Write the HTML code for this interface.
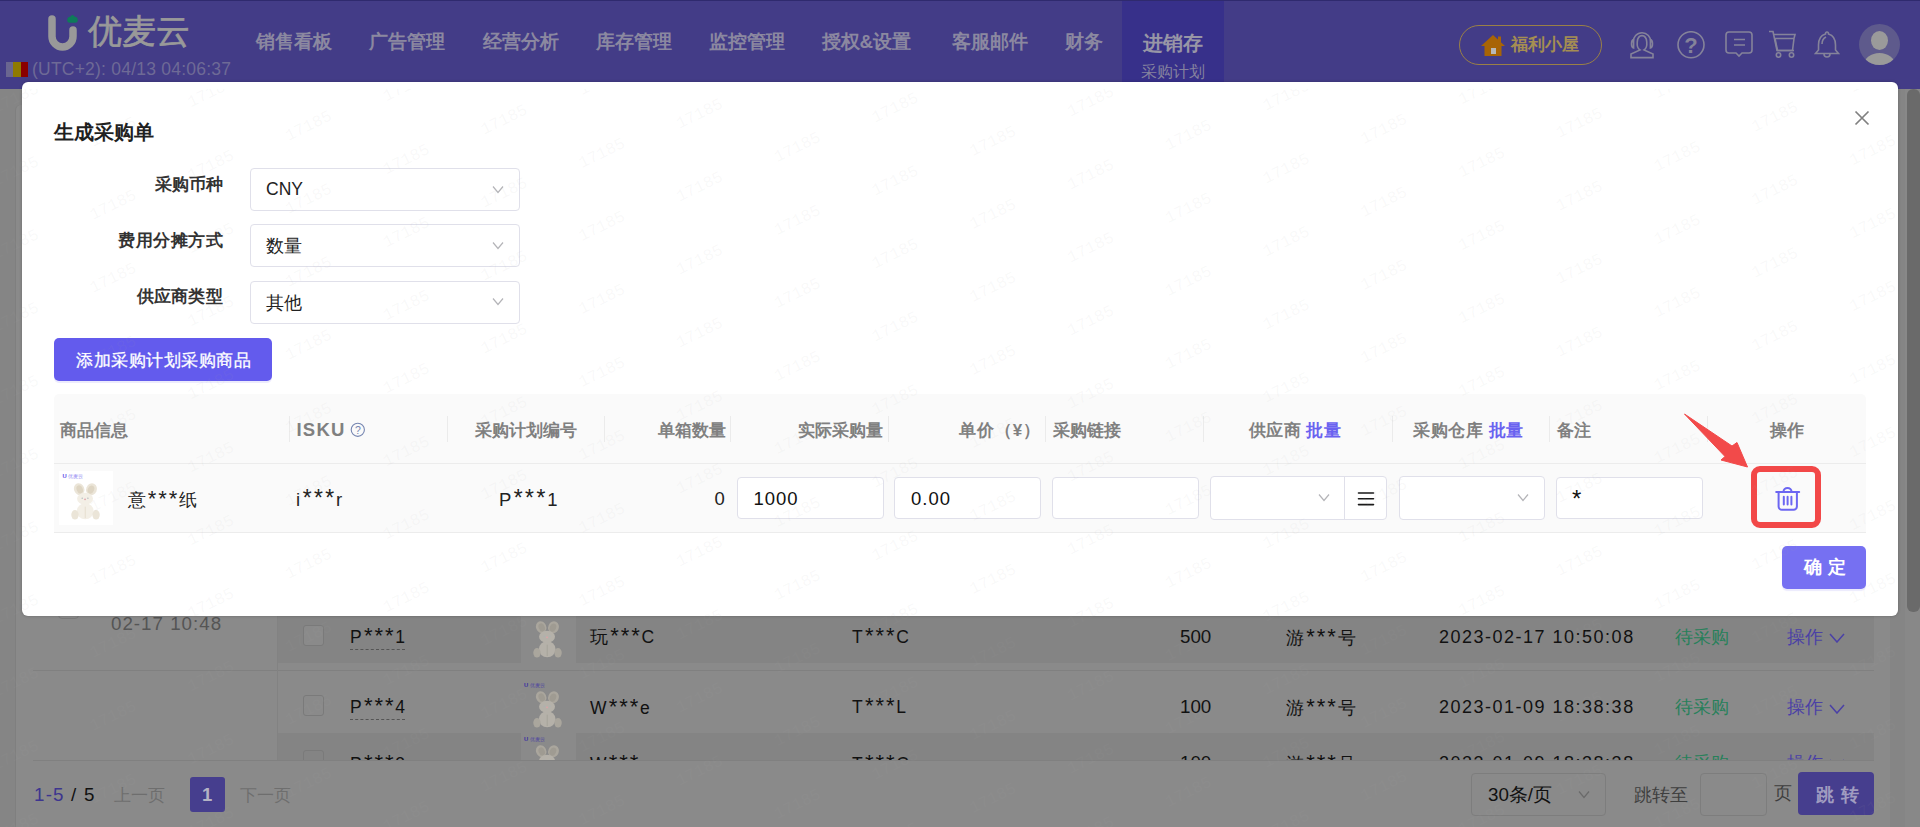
<!DOCTYPE html>
<html><head><meta charset="utf-8">
<style>
html,body{margin:0;padding:0;width:1920px;height:827px;overflow:hidden;background:#858585;font-family:"Liberation Sans",sans-serif;}
.a{position:absolute;}
.t{position:absolute;white-space:nowrap;line-height:1;}
.b{font-weight:bold;}
.mono{font-family:"Liberation Mono",monospace;}
.ast{font-family:"Liberation Mono",monospace;font-size:1.25em;letter-spacing:-2.6px;vertical-align:-0.05em;margin-right:2px}
</style></head><body>
<svg width="0" height="0" style="position:absolute"><defs>
<symbol id="rab" viewBox="0 0 40 46">
  <ellipse cx="12.8" cy="10.5" rx="5.4" ry="6.4" transform="rotate(-22 12.8 10.5)" fill="var(--c2)"/>
  <ellipse cx="25.8" cy="10.7" rx="5.6" ry="6.4" transform="rotate(24 25.8 10.7)" fill="var(--c2)"/>
  <ellipse cx="13.2" cy="11" rx="3.2" ry="4.4" transform="rotate(-22 12.8 10.5)" fill="var(--c3)"/>
  <ellipse cx="25.4" cy="11.2" rx="3.3" ry="4.4" transform="rotate(24 25.8 10.7)" fill="var(--c3)"/>
  <ellipse cx="19.2" cy="33.8" rx="8.8" ry="8.4" fill="var(--c1)"/>
  <ellipse cx="19" cy="20.6" rx="8.4" ry="6.4" fill="var(--c1)"/>
  <ellipse cx="8.4" cy="37.6" rx="3.9" ry="5" fill="var(--c2)"/>
  <ellipse cx="30.6" cy="37.6" rx="3.9" ry="5" fill="var(--c2)"/>
  <path d="M19.2 29 V41" stroke="var(--c3)" stroke-width="0.7"/>
  <circle cx="16" cy="20" r="0.7" fill="#a8b0b8"/><circle cx="22" cy="20" r="0.7" fill="#a8b0b8"/>
  <circle cx="19" cy="21.2" r="0.9" fill="#e0a0a8"/>
</symbol></defs></svg>
<!-- ============ BACKGROUND (already masked colours) ============ -->
<div class="a" style="left:0;top:0;width:1920px;height:89px;background:#433c87;"></div>
<div class="a" style="left:0;top:0;width:1920px;height:1px;background:#2f2a6e;"></div>
<div class="a" style="left:1122px;top:1px;width:102px;height:88px;background:#37308a;"></div>
<!-- logo -->
<svg class="a" style="left:44px;top:12px" width="40" height="42" viewBox="0 0 40 42">
  <path d="M8 7 V24.5 A10.5 10.5 0 0 0 29 24.5 V18" fill="none" stroke="#999" stroke-width="7.5" stroke-linecap="round"/>
  <path d="M23.2 8 q0-3 3-3.3 q1-1.6 2.3-1.6 q1.3 0 2.3 1.6 q3 0.3 3 3.3 q0 2.8-2.6 2.8 h-5.4 q-2.6 0-2.6-2.8z" fill="#0e7a5a"/>
</svg>
<div class="t" style="left:88px;top:15px;font-size:33.75px;color:#999;-webkit-text-stroke:0.7px #999;">优麦云</div>
<div class="a" style="left:6px;top:62px;width:7px;height:15px;background:#6a6690;"></div>
<div class="a" style="left:13px;top:62px;width:8px;height:15px;background:#8f7a00;"></div>
<div class="a" style="left:21px;top:62px;width:7px;height:15px;background:#8a0000;"></div>
<div class="t" style="left:32px;top:60.5px;font-size:17.5px;color:#6e6a96;letter-spacing:0.22px">(UTC+2): 04/13 04:06:37</div>
<!-- nav -->
<div class="t b" style="left:256px;top:33px;font-size:18.75px;color:#8b88a0;">销售看板</div>
<div class="t b" style="left:369px;top:33px;font-size:18.75px;color:#8b88a0;">广告管理</div>
<div class="t b" style="left:482.5px;top:33px;font-size:18.75px;color:#8b88a0;">经营分析</div>
<div class="t b" style="left:596px;top:33px;font-size:18.75px;color:#8b88a0;">库存管理</div>
<div class="t b" style="left:709px;top:33px;font-size:18.75px;color:#8b88a0;">监控管理</div>
<div class="t b" style="left:821.5px;top:33px;font-size:18.75px;color:#8b88a0;">授权&amp;设置</div>
<div class="t b" style="left:951.5px;top:33px;font-size:18.75px;color:#8b88a0;">客服邮件</div>
<div class="t b" style="left:1065px;top:33px;font-size:18.75px;color:#8b88a0;">财务</div>
<div class="t b" style="left:1142.5px;top:32.5px;font-size:20px;color:#9896a6;">进销存</div>
<div class="t" style="left:1141px;top:63.5px;font-size:16px;color:#85829e;">采购计划</div>
<!-- right header -->
<div class="a" style="left:1459px;top:25px;width:141px;height:38px;border:1px solid #9a8046;border-radius:20px;"></div>
<svg class="a" style="left:1480px;top:34px" width="26" height="23" viewBox="0 0 26 23">
  <path d="M13 1 L25 12 h-3.5 V22 H4.5 V12 H1 Z" fill="#a86406"/>
  <rect x="18" y="2.5" width="3" height="6" fill="#a86406"/>
  <rect x="11" y="14" width="5" height="6" fill="#b8b8b8"/>
</svg>
<div class="t b" style="left:1511px;top:36px;font-size:17px;color:#a58e52;">福利小屋</div>
<svg class="a" style="left:1628px;top:30px" width="28" height="30" viewBox="0 0 28 30" fill="none" stroke="#85839a" stroke-width="1.6">
  <path d="M12 20 C7.8 17.5 8.2 5.6 14 5.6 C19.8 5.6 20.2 17.5 16 20 L25 24 V27.6 H3 V24 Z"/>
  <path d="M5 12.5 A9 9.8 0 0 1 23 12.5"/>
  <path d="M5.6 9.6 C2.8 10.2 2.8 17.4 5.6 18 Z"/>
  <path d="M22.4 9.6 C25.2 10.2 25.2 17.4 22.4 18 Z"/>
</svg>
<svg class="a" style="left:1676px;top:31px" width="30" height="30" viewBox="0 0 30 30">
  <circle cx="15" cy="13.75" r="13" fill="none" stroke="#85839a" stroke-width="1.6"/>
  <text x="15" y="22" text-anchor="middle" font-family="Liberation Sans" font-weight="bold" font-size="22" fill="#85839a">?</text>
</svg>
<svg class="a" style="left:1725px;top:31px" width="30" height="28" viewBox="0 0 30 28" fill="none" stroke="#85839a" stroke-width="1.6">
  <path d="M4 1 h20 a3 3 0 0 1 3 3 v15 a3 3 0 0 1 -3 3 h-7 l-3 3 l-3-3 h-7 a3 3 0 0 1 -3-3 v-15 a3 3 0 0 1 3-3z"/>
  <path d="M9 8.5 h11 M9 14 h11"/>
</svg>
<svg class="a" style="left:1768px;top:30px" width="30" height="29" viewBox="0 0 30 29" fill="none" stroke="#85839a" stroke-width="1.6">
  <path d="M1 1.5 h4 l4 19 h17"/><path d="M5.5 4.5 h21.5 l-1 4 h-20 M7 8.5 l2.5 12 h15 l1.5-12"/>
  <circle cx="10.5" cy="25" r="2.2"/><circle cx="23.5" cy="25" r="2.2"/>
</svg>
<svg class="a" style="left:1814px;top:30px" width="26" height="29" viewBox="0 0 26 29" fill="none" stroke="#85839a" stroke-width="1.6">
  <path d="M13 2 q1.5 0 1.5 2 q7 2 7 11 v5 l3 3.5 h-23 l3-3.5 v-5 q0-9 7-11 q0-2 1.5-2z"/>
  <path d="M10 24 a3 3 0 0 0 6 0"/><path d="M8 14 q0-5 4-7" />
</svg>
<div class="a" style="left:1859px;top:24px;width:41px;height:41px;border-radius:50%;background:#5e5a8c;overflow:hidden;">
  <div class="a" style="left:12px;top:7px;width:17px;height:19px;border-radius:50%;background:#9a9a9a;"></div>
  <div class="a" style="left:5px;top:28.5px;width:31px;height:24px;border-radius:50%;background:#9a9a9a;"></div>
</div>

<!-- page body -->
<div class="a" style="left:16px;top:105px;width:1874px;height:730px;background:#8a8a8a;border-radius:5px;box-shadow:-1px 0 0 rgba(0,0,0,0.04);"></div>
<!-- scrollbar -->
<div class="a" style="left:1905px;top:89px;width:15px;height:738px;background:#888;"></div>
<div class="a" style="left:1907px;top:89px;width:13px;height:523px;border-radius:6px;background:#6a6a6a;"></div>

<!-- background table rows -->
<div class="a" style="left:277px;top:616px;width:1597px;height:47px;background:#848484;"></div>
<div class="a" style="left:521px;top:616px;width:55px;height:47px;background:#8a8a8a;"></div>
<div class="a" style="left:33px;top:670px;width:1841px;height:1px;background:#808080;"></div>
<div class="a" style="left:277px;top:733px;width:1597px;height:27px;background:#848484;"></div>
<div class="a" style="left:521px;top:733px;width:55px;height:27px;background:#8a8a8a;"></div>
<div class="a" style="left:277px;top:616px;width:1px;height:144px;background:#828282;"></div>
<div class="a" style="left:33px;top:760px;width:1841px;height:1px;background:#808080;"></div>
<div class="a" style="left:58px;top:598px;width:19px;height:19px;border:1px solid #7a7a7a;border-radius:4px;"></div>
<div class="t" style="left:111px;top:615px;font-size:18.75px;color:#555;letter-spacing:1px">02-17 10:48</div>

<!-- row 1 -->
<div class="a" style="left:303px;top:625px;width:19px;height:19px;border:1px solid #7a7a7a;border-radius:3px;background:#8a8a8a;"></div>
<div class="t" style="left:350px;top:627.5px;font-size:17.5px;color:#111;">P<span class="ast">***</span>1</div>
<div class="a" style="left:350px;top:649px;width:55px;height:0;border-top:1px dashed #555;"></div>
<svg class="a" style="left:529px;top:617px;--c1:#b5b1a9;--c2:#aaa69d;--c3:#9f9b92" width="38" height="44"><use href="#rab"/></svg>
<div class="t" style="left:590px;top:627.5px;font-size:17.5px;color:#111;">玩<span class="ast">***</span>C</div>
<div class="t" style="left:852px;top:627.5px;font-size:17.5px;color:#111;">T<span class="ast">***</span>C</div>
<div class="t" style="left:1180px;top:627.5px;font-size:18.75px;color:#111;">500</div>
<div class="t" style="left:1286px;top:628.5px;font-size:17.5px;color:#111;">游<span class="ast">***</span>号</div>
<div class="t" style="left:1439px;top:628px;font-size:18px;color:#111;letter-spacing:1.5px">2023-02-17 10:50:08</div>
<div class="t" style="left:1675px;top:628.5px;font-size:17.5px;color:#27805a;">待采购</div>
<div class="t" style="left:1787px;top:628.5px;font-size:17.5px;color:#4a40a6;">操作</div><svg class="a" style="left:1829px;top:633px" width="16" height="10" viewBox="0 0 16 10"><path d="M1 1 L8 9 L15 1" fill="none" stroke="#4a40a6" stroke-width="1.5"/></svg>
<!-- row 2 -->
<div class="a" style="left:303px;top:695px;width:19px;height:19px;border:1px solid #7a7a7a;border-radius:3px;background:#8a8a8a;"></div>
<div class="t" style="left:350px;top:698px;font-size:17.5px;color:#111;">P<span class="ast">***</span>4</div>
<div class="a" style="left:350px;top:719px;width:55px;height:0;border-top:1px dashed #555;"></div>
<div class="t" style="left:524px;top:683px;font-size:5.2px;color:#4a42a0;"><b style="color:#3a30a0;font-size:5.8px">U</b> 优麦云</div><svg class="a" style="left:529px;top:687px;--c1:#b5b1a9;--c2:#aaa69d;--c3:#9f9b92" width="38" height="44"><use href="#rab"/></svg>
<div class="t" style="left:590px;top:699px;font-size:17.5px;color:#111;">W<span class="ast">***</span>e</div>
<div class="t" style="left:852px;top:698px;font-size:17.5px;color:#111;">T<span class="ast">***</span>L</div>
<div class="t" style="left:1180px;top:697.5px;font-size:18.75px;color:#111;">100</div>
<div class="t" style="left:1286px;top:699px;font-size:17.5px;color:#111;">游<span class="ast">***</span>号</div>
<div class="t" style="left:1439px;top:698px;font-size:18px;color:#111;letter-spacing:1.5px">2023-01-09 18:38:38</div>
<div class="t" style="left:1675px;top:699px;font-size:17.5px;color:#27805a;">待采购</div>
<div class="t" style="left:1787px;top:699px;font-size:17.5px;color:#4a40a6;">操作</div><svg class="a" style="left:1829px;top:704px" width="16" height="10" viewBox="0 0 16 10"><path d="M1 1 L8 9 L15 1" fill="none" stroke="#4a40a6" stroke-width="1.5"/></svg>
<!-- row 3 truncated -->
<div class="a" style="left:0;top:733px;width:1920px;height:27px;overflow:hidden;">
  <div class="a" style="left:303px;top:17px;width:19px;height:19px;border:1px solid #7a7a7a;border-radius:3px;"></div>
  <div class="t" style="left:350px;top:21.5px;font-size:17.5px;color:#111;">P<span class="ast">***</span>3</div>
  <div class="t" style="left:524px;top:3.5px;font-size:5.2px;color:#4a42a0;"><b style="color:#3a30a0;font-size:5.8px">U</b> 优麦云</div><svg class="a" style="left:529px;top:8px;--c1:#b5b1a9;--c2:#aaa69d;--c3:#9f9b92" width="38" height="44"><use href="#rab"/></svg>
  <div class="t" style="left:590px;top:21.5px;font-size:17.5px;color:#111;">W<span class="ast">***</span>e</div>
  <div class="t" style="left:852px;top:21.5px;font-size:17.5px;color:#111;">T<span class="ast">***</span>C</div>
  <div class="t" style="left:1180px;top:20.5px;font-size:18.75px;color:#111;">100</div>
  <div class="t" style="left:1286px;top:21.5px;font-size:17.5px;color:#111;">游<span class="ast">***</span>号</div>
  <div class="t" style="left:1439px;top:21px;font-size:18px;color:#111;letter-spacing:1.5px">2023-01-09 18:38:38</div>
  <div class="t" style="left:1675px;top:21.5px;font-size:17.5px;color:#27805a;">待采购</div>
  <div class="t" style="left:1787px;top:21.5px;font-size:17.5px;color:#4a40a6;">操作</div><svg class="a" style="left:1829px;top:26px" width="16" height="10" viewBox="0 0 16 10"><path d="M1 1 L8 9 L15 1" fill="none" stroke="#4a40a6" stroke-width="1.5"/></svg>
</div>
<!-- footer pagination -->
<div class="t" style="left:34px;top:786px;font-size:18.75px;color:#111;letter-spacing:1.2px"><span style="color:#3d358f">1-5</span> / 5</div>
<div class="t" style="left:114px;top:787px;font-size:17px;color:#6e6e6e;">上一页</div>
<div class="a" style="left:190px;top:777px;width:35px;height:35px;border-radius:3px;background:#463e8e;"></div>
<div class="t b" style="left:202px;top:786px;font-size:18.5px;color:#b4b2c4;">1</div>
<div class="t" style="left:239.5px;top:787px;font-size:17px;color:#6e6e6e;">下一页</div>
<div class="a" style="left:1471px;top:773px;width:133px;height:41px;border:1px solid #7d7d7d;border-radius:4px;"></div>
<div class="t" style="left:1488px;top:786px;font-size:18.75px;color:#111;">30条/页</div><svg class="a" style="left:1578px;top:790px" width="12" height="9" viewBox="0 0 12 9"><path d="M1 1.5 L6 7.5 L11 1.5" fill="none" stroke="#6a6a6a" stroke-width="1.2"/></svg>
<div class="t" style="left:1634px;top:786.5px;font-size:17.5px;color:#3e3e3e;">跳转至</div>
<div class="a" style="left:1700px;top:773px;width:65px;height:41px;border:1px solid #7d7d7d;border-radius:4px;"></div>
<div class="t" style="left:1774px;top:785px;font-size:17.5px;color:#3e3e3e;">页</div>
<div class="a" style="left:1798px;top:772px;width:76px;height:43px;border-radius:4px;background:#463e8e;"></div>
<div class="t b" style="left:1815.5px;top:787px;font-size:17.5px;color:#a09cc0;letter-spacing:1.5px;">跳 转</div>



<!-- ============ MODAL ============ -->
<div class="a" style="left:22px;top:82px;width:1876px;height:534px;background:#fff;border-radius:6px;box-shadow:0 0 3px rgba(0,0,0,0.25);"></div>
<div class="a" style="left:0;top:0;width:1920px;height:827px;">
<!-- close -->
<svg class="a" style="left:1854px;top:110px" width="16" height="16" viewBox="0 0 16 16"><path d="M1.5 1.5 L14.5 14.5 M14.5 1.5 L1.5 14.5" stroke="#808080" stroke-width="1.7"/></svg>
<div class="t b" style="left:54px;top:122.4px;font-size:20px;color:#1f1f1f;">生成采购单</div>
<div class="t b" style="right:1697px;top:175.5px;font-size:17px;color:#333;">采购币种</div>
<div class="t b" style="right:1697px;top:231.5px;font-size:17px;color:#333;letter-spacing:0.5px">费用分摊方式</div>
<div class="t b" style="right:1697px;top:288px;font-size:17px;color:#333;letter-spacing:0.3px">供应商类型</div>
<!-- selects -->
<div class="a" style="left:250px;top:168px;width:268px;height:41px;border:1px solid #e0e0ea;border-radius:4px;"></div>
<div class="t" style="left:266px;top:180.5px;font-size:17.5px;color:#222;">CNY</div>
<div class="a" style="left:250px;top:224px;width:268px;height:41px;border:1px solid #e0e0ea;border-radius:4px;"></div>
<div class="t" style="left:266px;top:238.3px;font-size:17.5px;color:#222;">数量</div>
<div class="a" style="left:250px;top:281px;width:268px;height:41px;border:1px solid #e0e0ea;border-radius:4px;"></div>
<div class="t" style="left:266px;top:294.5px;font-size:17.5px;color:#222;">其他</div>
<svg class="a" style="left:492px;top:185px" width="12" height="9" viewBox="0 0 12 9"><path d="M1 1.5 L6 7.5 L11 1.5" fill="none" stroke="#b4b4b8" stroke-width="1.2"/></svg>
<svg class="a" style="left:492px;top:241px" width="12" height="9" viewBox="0 0 12 9"><path d="M1 1.5 L6 7.5 L11 1.5" fill="none" stroke="#b4b4b8" stroke-width="1.2"/></svg>
<svg class="a" style="left:492px;top:297px" width="12" height="9" viewBox="0 0 12 9"><path d="M1 1.5 L6 7.5 L11 1.5" fill="none" stroke="#b4b4b8" stroke-width="1.2"/></svg>
<!-- add button -->
<div class="a" style="left:54px;top:338px;width:218px;height:43px;background:#635bed;border-radius:5px;box-shadow:0 2px 0 rgba(99,91,237,0.12);"></div>
<div class="t" style="left:76px;top:351.5px;font-size:17px;color:#fff;letter-spacing:0.5px;-webkit-text-stroke:0.3px #fff">添加采购计划采购商品</div>

<!-- table -->
<div class="a" style="left:54px;top:394px;width:1812px;height:138px;background:#fafafa;border-radius:5px 5px 0 0;"></div>
<div class="a" style="left:54px;top:463px;width:1812px;height:1px;background:#ececec;"></div>
<div class="a" style="left:54px;top:532px;width:1812px;height:1px;background:#ececec;"></div>
<!-- column dividers -->
<div class="a" style="left:289px;top:416px;width:1px;height:26px;background:#ebebeb;"></div>
<div class="a" style="left:447px;top:416px;width:1px;height:26px;background:#ebebeb;"></div>
<div class="a" style="left:604px;top:416px;width:1px;height:26px;background:#ebebeb;"></div>
<div class="a" style="left:730px;top:416px;width:1px;height:26px;background:#ebebeb;"></div>
<div class="a" style="left:888px;top:416px;width:1px;height:26px;background:#ebebeb;"></div>
<div class="a" style="left:1045px;top:416px;width:1px;height:26px;background:#ebebeb;"></div>
<div class="a" style="left:1203px;top:416px;width:1px;height:26px;background:#ebebeb;"></div>
<div class="a" style="left:1392px;top:416px;width:1px;height:26px;background:#ebebeb;"></div>
<div class="a" style="left:1549px;top:416px;width:1px;height:26px;background:#ebebeb;"></div>
<div class="a" style="left:1707px;top:416px;width:1px;height:26px;background:#ebebeb;"></div>
<!-- header texts -->
<div class="t b" style="left:60px;top:421.5px;font-size:17px;color:#808080;">商品信息</div>
<div class="t b" style="left:296.5px;top:421px;font-size:18.5px;color:#808080;letter-spacing:1.2px">ISKU</div>
<svg class="a" style="left:350px;top:422px" width="16" height="16" viewBox="0 0 16 16"><circle cx="7.8" cy="7.8" r="6.6" fill="none" stroke="#7585b0" stroke-width="1.1"/><text x="7.8" y="11.8" text-anchor="middle" font-family="Liberation Sans" font-size="10.5" fill="#7585b0">?</text></svg>
<div class="t b" style="left:474.5px;top:421.5px;font-size:17px;color:#808080;">采购计划编号</div>
<div class="t b" style="left:657.5px;top:421.5px;font-size:17px;color:#808080;">单箱数量</div>
<div class="t b" style="left:798px;top:421.5px;font-size:17px;color:#808080;">实际采购量</div>
<div class="t b" style="left:959px;top:421.5px;font-size:17px;color:#808080;letter-spacing:0.9px">单价（¥）</div>
<div class="t b" style="left:1052.5px;top:421.5px;font-size:17px;color:#808080;">采购链接</div>
<div class="t b" style="left:1248.5px;top:421.5px;font-size:17px;color:#808080;letter-spacing:0.5px">供应商 <span style="color:#6a62f0">批量</span></div>
<div class="t b" style="left:1413px;top:421.5px;font-size:17px;color:#808080;letter-spacing:0.6px">采购仓库 <span style="color:#6a62f0">批量</span></div>
<div class="t b" style="left:1557px;top:421.5px;font-size:17px;color:#808080;">备注</div>
<div class="t b" style="left:1770px;top:421.5px;font-size:17px;color:#808080;">操作</div>
<!-- row -->
<div class="a" style="left:59px;top:471px;width:54px;height:54px;background:#fff;overflow:hidden;">
  <div class="t" style="left:3.5px;top:2.5px;font-size:5.2px;color:#9088f2;"><b style="color:#5a4ee8;font-size:5.8px">U</b> 优麦云</div>
  <svg class="a" style="left:8px;top:8px;--c1:#f3efe6;--c2:#ebe5d8;--c3:#ded5c3" width="38" height="44"><use href="#rab"/></svg>
</div>
<div class="t" style="left:127.5px;top:490.5px;font-size:17.5px;color:#222;">意<span class="ast">***</span>纸</div>
<div class="t" style="left:296px;top:490px;font-size:18.5px;color:#222;">i<span class="ast">***</span>r</div>
<div class="t" style="left:499px;top:490px;font-size:18.5px;color:#222;">P<span class="ast">***</span>1</div>
<div class="t" style="left:714.5px;top:490px;font-size:18.5px;color:#222;">0</div>
<!-- inputs -->
<div class="a" style="left:737px;top:477px;width:145px;height:40px;border:1px solid #e0e0ea;border-radius:4px;background:#fff;"></div>
<div class="t" style="left:753.5px;top:489.5px;font-size:18.5px;color:#111;letter-spacing:1px;">1000</div>
<div class="a" style="left:894px;top:477px;width:145px;height:40px;border:1px solid #e0e0ea;border-radius:4px;background:#fff;"></div>
<div class="t" style="left:911px;top:489.5px;font-size:18.5px;color:#111;letter-spacing:1px;">0.00</div>
<div class="a" style="left:1052px;top:477px;width:145px;height:40px;border:1px solid #e0e0ea;border-radius:4px;background:#fff;"></div>
<div class="a" style="left:1210px;top:476px;width:175px;height:42px;border:1px solid #e0e0ea;border-radius:4px;background:#fff;"></div>
<div class="a" style="left:1344px;top:477px;width:1px;height:42px;background:#e0e0ea;"></div>
<svg class="a" style="left:1318px;top:493px" width="12" height="9" viewBox="0 0 12 9"><path d="M1 1.5 L6 7.5 L11 1.5" fill="none" stroke="#b4b4b8" stroke-width="1.2"/></svg>
<svg class="a" style="left:1356.5px;top:491px" width="18" height="16" viewBox="0 0 18 16"><path d="M1.5 2 H16.5 M1.5 7.8 H16.5 M1.5 13.6 H16.5" stroke="#1a1a1a" stroke-width="1.6" stroke-linecap="round"/></svg>
<div class="a" style="left:1399px;top:476px;width:144px;height:42px;border:1px solid #e0e0ea;border-radius:4px;background:#fff;"></div>
<svg class="a" style="left:1517px;top:493px" width="12" height="9" viewBox="0 0 12 9"><path d="M1 1.5 L6 7.5 L11 1.5" fill="none" stroke="#b4b4b8" stroke-width="1.2"/></svg>
<div class="a" style="left:1556px;top:477px;width:145px;height:40px;border:1px solid #e0e0ea;border-radius:4px;background:#fff;"></div>
<div class="t" style="left:1572px;top:486.5px;font-size:24px;color:#111;">*</div>
<!-- red box + trash -->
<div class="a" style="left:1751px;top:466px;width:58px;height:50px;border:6px solid #f24848;border-radius:9px;"></div>
<svg class="a" style="left:1774px;top:485px" width="27" height="27" viewBox="0 0 27 27" fill="none" stroke="#6c66f2" stroke-width="2" stroke-linecap="round">
  <path d="M2.2 7 H25.2"/><path d="M9.5 6.5 a4 3.6 0 0 1 8 0"/>
  <path d="M4.6 7.5 V21.5 a3.3 3.3 0 0 0 3.3 3.3 H19.6 a3.3 3.3 0 0 0 3.3 -3.3 V7.5"/>
  <path d="M9.8 11.8 V19.6 M13.6 11.8 V19.6 M17.4 11.8 V19.6"/>
</svg>
<!-- arrow -->
<svg class="a" style="left:0;top:0" width="1920" height="600">
  <path d="M1684.5 414 L1732 446 L1737 442.5 L1747.5 467 L1721 460 L1725 456.5 Z" fill="#f24a4a" stroke="#f24a4a" stroke-width="1" stroke-linejoin="round"/>
</svg>
<!-- confirm -->
<div class="a" style="left:1782px;top:546px;width:84px;height:43px;background:#7670f2;border-radius:5px;box-shadow:0 2px 1px rgba(118,112,242,0.15);"></div>
<div class="t b" style="left:1804px;top:558.5px;font-size:17.5px;color:#fff;letter-spacing:0.6px;">确 定</div>
</div>
<div class="a" style="left:22px;top:82px;width:1876px;height:534px;border-radius:6px;overflow:hidden;"></div>
<div class="a" style="left:0;top:89px;width:1920px;height:738px;overflow:hidden"><svg class="a" style="left:0;top:0" width="1920" height="738"><g font-family="Liberation Mono" font-size="16.5" fill="rgba(170,170,170,0.075)" text-anchor="middle"><text x="112.6" y="-25.2" transform="rotate(-26 112.6 -31.2)">17185</text><text x="14.9" y="14.3" transform="rotate(-26 14.9 8.3)">17185</text><text x="112.6" y="47.8" transform="rotate(-26 112.6 41.8)">17185</text><text x="14.9" y="87.3" transform="rotate(-26 14.9 81.3)">17185</text><text x="112.6" y="120.8" transform="rotate(-26 112.6 114.8)">17185</text><text x="14.9" y="160.3" transform="rotate(-26 14.9 154.3)">17185</text><text x="112.6" y="193.8" transform="rotate(-26 112.6 187.8)">17185</text><text x="14.9" y="233.3" transform="rotate(-26 14.9 227.3)">17185</text><text x="112.6" y="266.8" transform="rotate(-26 112.6 260.8)">17185</text><text x="14.9" y="306.3" transform="rotate(-26 14.9 300.3)">17185</text><text x="112.6" y="339.8" transform="rotate(-26 112.6 333.8)">17185</text><text x="14.9" y="379.3" transform="rotate(-26 14.9 373.3)">17185</text><text x="112.6" y="412.8" transform="rotate(-26 112.6 406.8)">17185</text><text x="14.9" y="452.3" transform="rotate(-26 14.9 446.3)">17185</text><text x="112.6" y="485.8" transform="rotate(-26 112.6 479.8)">17185</text><text x="14.9" y="525.3" transform="rotate(-26 14.9 519.3)">17185</text><text x="112.6" y="558.8" transform="rotate(-26 112.6 552.8)">17185</text><text x="14.9" y="598.3" transform="rotate(-26 14.9 592.3)">17185</text><text x="112.6" y="631.8" transform="rotate(-26 112.6 625.8)">17185</text><text x="14.9" y="671.3" transform="rotate(-26 14.9 665.3)">17185</text><text x="112.6" y="704.8" transform="rotate(-26 112.6 698.8)">17185</text><text x="14.9" y="744.3" transform="rotate(-26 14.9 738.3)">17185</text><text x="112.6" y="777.8" transform="rotate(-26 112.6 771.8)">17185</text><text x="308.1" y="-31.3" transform="rotate(-26 308.1 -37.3)">17185</text><text x="210.4" y="8.2" transform="rotate(-26 210.4 2.2)">17185</text><text x="308.1" y="41.7" transform="rotate(-26 308.1 35.7)">17185</text><text x="210.4" y="81.2" transform="rotate(-26 210.4 75.2)">17185</text><text x="308.1" y="114.7" transform="rotate(-26 308.1 108.7)">17185</text><text x="210.4" y="154.2" transform="rotate(-26 210.4 148.2)">17185</text><text x="308.1" y="187.7" transform="rotate(-26 308.1 181.7)">17185</text><text x="210.4" y="227.2" transform="rotate(-26 210.4 221.2)">17185</text><text x="308.1" y="260.7" transform="rotate(-26 308.1 254.7)">17185</text><text x="210.4" y="300.2" transform="rotate(-26 210.4 294.2)">17185</text><text x="308.1" y="333.7" transform="rotate(-26 308.1 327.7)">17185</text><text x="210.4" y="373.2" transform="rotate(-26 210.4 367.2)">17185</text><text x="308.1" y="406.7" transform="rotate(-26 308.1 400.7)">17185</text><text x="210.4" y="446.2" transform="rotate(-26 210.4 440.2)">17185</text><text x="308.1" y="479.7" transform="rotate(-26 308.1 473.7)">17185</text><text x="210.4" y="519.2" transform="rotate(-26 210.4 513.2)">17185</text><text x="308.1" y="552.7" transform="rotate(-26 308.1 546.7)">17185</text><text x="210.4" y="592.2" transform="rotate(-26 210.4 586.2)">17185</text><text x="308.1" y="625.7" transform="rotate(-26 308.1 619.7)">17185</text><text x="210.4" y="665.2" transform="rotate(-26 210.4 659.2)">17185</text><text x="308.1" y="698.7" transform="rotate(-26 308.1 692.7)">17185</text><text x="210.4" y="738.2" transform="rotate(-26 210.4 732.2)">17185</text><text x="308.1" y="771.7" transform="rotate(-26 308.1 765.7)">17185</text><text x="405.9" y="2.2" transform="rotate(-26 405.9 -3.8)">17185</text><text x="503.6" y="35.6" transform="rotate(-26 503.6 29.6)">17185</text><text x="405.9" y="75.2" transform="rotate(-26 405.9 69.2)">17185</text><text x="503.6" y="108.6" transform="rotate(-26 503.6 102.6)">17185</text><text x="405.9" y="148.2" transform="rotate(-26 405.9 142.2)">17185</text><text x="503.6" y="181.6" transform="rotate(-26 503.6 175.6)">17185</text><text x="405.9" y="221.2" transform="rotate(-26 405.9 215.2)">17185</text><text x="503.6" y="254.6" transform="rotate(-26 503.6 248.6)">17185</text><text x="405.9" y="294.2" transform="rotate(-26 405.9 288.2)">17185</text><text x="503.6" y="327.6" transform="rotate(-26 503.6 321.6)">17185</text><text x="405.9" y="367.2" transform="rotate(-26 405.9 361.2)">17185</text><text x="503.6" y="400.6" transform="rotate(-26 503.6 394.6)">17185</text><text x="405.9" y="440.2" transform="rotate(-26 405.9 434.2)">17185</text><text x="503.6" y="473.6" transform="rotate(-26 503.6 467.6)">17185</text><text x="405.9" y="513.2" transform="rotate(-26 405.9 507.2)">17185</text><text x="503.6" y="546.6" transform="rotate(-26 503.6 540.6)">17185</text><text x="405.9" y="586.2" transform="rotate(-26 405.9 580.2)">17185</text><text x="503.6" y="619.6" transform="rotate(-26 503.6 613.6)">17185</text><text x="405.9" y="659.2" transform="rotate(-26 405.9 653.2)">17185</text><text x="503.6" y="692.6" transform="rotate(-26 503.6 686.6)">17185</text><text x="405.9" y="732.2" transform="rotate(-26 405.9 726.2)">17185</text><text x="503.6" y="765.6" transform="rotate(-26 503.6 759.6)">17185</text><text x="601.4" y="-3.9" transform="rotate(-26 601.4 -9.9)">17185</text><text x="699.1" y="29.6" transform="rotate(-26 699.1 23.6)">17185</text><text x="601.4" y="69.1" transform="rotate(-26 601.4 63.1)">17185</text><text x="699.1" y="102.6" transform="rotate(-26 699.1 96.6)">17185</text><text x="601.4" y="142.1" transform="rotate(-26 601.4 136.1)">17185</text><text x="699.1" y="175.6" transform="rotate(-26 699.1 169.6)">17185</text><text x="601.4" y="215.1" transform="rotate(-26 601.4 209.1)">17185</text><text x="699.1" y="248.6" transform="rotate(-26 699.1 242.6)">17185</text><text x="601.4" y="288.1" transform="rotate(-26 601.4 282.1)">17185</text><text x="699.1" y="321.6" transform="rotate(-26 699.1 315.6)">17185</text><text x="601.4" y="361.1" transform="rotate(-26 601.4 355.1)">17185</text><text x="699.1" y="394.6" transform="rotate(-26 699.1 388.6)">17185</text><text x="601.4" y="434.1" transform="rotate(-26 601.4 428.1)">17185</text><text x="699.1" y="467.6" transform="rotate(-26 699.1 461.6)">17185</text><text x="601.4" y="507.1" transform="rotate(-26 601.4 501.1)">17185</text><text x="699.1" y="540.6" transform="rotate(-26 699.1 534.6)">17185</text><text x="601.4" y="580.1" transform="rotate(-26 601.4 574.1)">17185</text><text x="699.1" y="613.6" transform="rotate(-26 699.1 607.6)">17185</text><text x="601.4" y="653.1" transform="rotate(-26 601.4 647.1)">17185</text><text x="699.1" y="686.6" transform="rotate(-26 699.1 680.6)">17185</text><text x="601.4" y="726.1" transform="rotate(-26 601.4 720.1)">17185</text><text x="699.1" y="759.6" transform="rotate(-26 699.1 753.6)">17185</text><text x="796.9" y="-10.0" transform="rotate(-26 796.9 -16.0)">17185</text><text x="894.6" y="23.5" transform="rotate(-26 894.6 17.5)">17185</text><text x="796.9" y="63.0" transform="rotate(-26 796.9 57.0)">17185</text><text x="894.6" y="96.5" transform="rotate(-26 894.6 90.5)">17185</text><text x="796.9" y="136.0" transform="rotate(-26 796.9 130.0)">17185</text><text x="894.6" y="169.5" transform="rotate(-26 894.6 163.5)">17185</text><text x="796.9" y="209.0" transform="rotate(-26 796.9 203.0)">17185</text><text x="894.6" y="242.5" transform="rotate(-26 894.6 236.5)">17185</text><text x="796.9" y="282.0" transform="rotate(-26 796.9 276.0)">17185</text><text x="894.6" y="315.5" transform="rotate(-26 894.6 309.5)">17185</text><text x="796.9" y="355.0" transform="rotate(-26 796.9 349.0)">17185</text><text x="894.6" y="388.5" transform="rotate(-26 894.6 382.5)">17185</text><text x="796.9" y="428.0" transform="rotate(-26 796.9 422.0)">17185</text><text x="894.6" y="461.5" transform="rotate(-26 894.6 455.5)">17185</text><text x="796.9" y="501.0" transform="rotate(-26 796.9 495.0)">17185</text><text x="894.6" y="534.5" transform="rotate(-26 894.6 528.5)">17185</text><text x="796.9" y="574.0" transform="rotate(-26 796.9 568.0)">17185</text><text x="894.6" y="607.5" transform="rotate(-26 894.6 601.5)">17185</text><text x="796.9" y="647.0" transform="rotate(-26 796.9 641.0)">17185</text><text x="894.6" y="680.5" transform="rotate(-26 894.6 674.5)">17185</text><text x="796.9" y="720.0" transform="rotate(-26 796.9 714.0)">17185</text><text x="894.6" y="753.5" transform="rotate(-26 894.6 747.5)">17185</text><text x="992.4" y="-16.0" transform="rotate(-26 992.4 -22.0)">17185</text><text x="1090.2" y="17.4" transform="rotate(-26 1090.2 11.4)">17185</text><text x="992.4" y="57.0" transform="rotate(-26 992.4 51.0)">17185</text><text x="1090.2" y="90.4" transform="rotate(-26 1090.2 84.4)">17185</text><text x="992.4" y="130.0" transform="rotate(-26 992.4 124.0)">17185</text><text x="1090.2" y="163.4" transform="rotate(-26 1090.2 157.4)">17185</text><text x="992.4" y="203.0" transform="rotate(-26 992.4 197.0)">17185</text><text x="1090.2" y="236.4" transform="rotate(-26 1090.2 230.4)">17185</text><text x="992.4" y="276.0" transform="rotate(-26 992.4 270.0)">17185</text><text x="1090.2" y="309.4" transform="rotate(-26 1090.2 303.4)">17185</text><text x="992.4" y="349.0" transform="rotate(-26 992.4 343.0)">17185</text><text x="1090.2" y="382.4" transform="rotate(-26 1090.2 376.4)">17185</text><text x="992.4" y="422.0" transform="rotate(-26 992.4 416.0)">17185</text><text x="1090.2" y="455.5" transform="rotate(-26 1090.2 449.5)">17185</text><text x="992.4" y="495.0" transform="rotate(-26 992.4 489.0)">17185</text><text x="1090.2" y="528.5" transform="rotate(-26 1090.2 522.5)">17185</text><text x="992.4" y="568.0" transform="rotate(-26 992.4 562.0)">17185</text><text x="1090.2" y="601.5" transform="rotate(-26 1090.2 595.5)">17185</text><text x="992.4" y="641.0" transform="rotate(-26 992.4 635.0)">17185</text><text x="1090.2" y="674.5" transform="rotate(-26 1090.2 668.5)">17185</text><text x="992.4" y="714.0" transform="rotate(-26 992.4 708.0)">17185</text><text x="1090.2" y="747.5" transform="rotate(-26 1090.2 741.5)">17185</text><text x="1187.9" y="-22.1" transform="rotate(-26 1187.9 -28.1)">17185</text><text x="1285.7" y="11.4" transform="rotate(-26 1285.7 5.4)">17185</text><text x="1187.9" y="50.9" transform="rotate(-26 1187.9 44.9)">17185</text><text x="1285.7" y="84.4" transform="rotate(-26 1285.7 78.4)">17185</text><text x="1187.9" y="123.9" transform="rotate(-26 1187.9 117.9)">17185</text><text x="1285.7" y="157.4" transform="rotate(-26 1285.7 151.4)">17185</text><text x="1187.9" y="196.9" transform="rotate(-26 1187.9 190.9)">17185</text><text x="1285.7" y="230.4" transform="rotate(-26 1285.7 224.4)">17185</text><text x="1187.9" y="269.9" transform="rotate(-26 1187.9 263.9)">17185</text><text x="1285.7" y="303.4" transform="rotate(-26 1285.7 297.4)">17185</text><text x="1187.9" y="342.9" transform="rotate(-26 1187.9 336.9)">17185</text><text x="1285.7" y="376.4" transform="rotate(-26 1285.7 370.4)">17185</text><text x="1187.9" y="415.9" transform="rotate(-26 1187.9 409.9)">17185</text><text x="1285.7" y="449.4" transform="rotate(-26 1285.7 443.4)">17185</text><text x="1187.9" y="488.9" transform="rotate(-26 1187.9 482.9)">17185</text><text x="1285.7" y="522.4" transform="rotate(-26 1285.7 516.4)">17185</text><text x="1187.9" y="561.9" transform="rotate(-26 1187.9 555.9)">17185</text><text x="1285.7" y="595.4" transform="rotate(-26 1285.7 589.4)">17185</text><text x="1187.9" y="634.9" transform="rotate(-26 1187.9 628.9)">17185</text><text x="1285.7" y="668.4" transform="rotate(-26 1285.7 662.4)">17185</text><text x="1187.9" y="707.9" transform="rotate(-26 1187.9 701.9)">17185</text><text x="1285.7" y="741.4" transform="rotate(-26 1285.7 735.4)">17185</text><text x="1187.9" y="780.9" transform="rotate(-26 1187.9 774.9)">17185</text><text x="1383.4" y="-28.1" transform="rotate(-26 1383.4 -34.1)">17185</text><text x="1481.2" y="5.3" transform="rotate(-26 1481.2 -0.7)">17185</text><text x="1383.4" y="44.9" transform="rotate(-26 1383.4 38.9)">17185</text><text x="1481.2" y="78.3" transform="rotate(-26 1481.2 72.3)">17185</text><text x="1383.4" y="117.9" transform="rotate(-26 1383.4 111.9)">17185</text><text x="1481.2" y="151.3" transform="rotate(-26 1481.2 145.3)">17185</text><text x="1383.4" y="190.9" transform="rotate(-26 1383.4 184.9)">17185</text><text x="1481.2" y="224.3" transform="rotate(-26 1481.2 218.3)">17185</text><text x="1383.4" y="263.9" transform="rotate(-26 1383.4 257.9)">17185</text><text x="1481.2" y="297.3" transform="rotate(-26 1481.2 291.3)">17185</text><text x="1383.4" y="336.9" transform="rotate(-26 1383.4 330.9)">17185</text><text x="1481.2" y="370.3" transform="rotate(-26 1481.2 364.3)">17185</text><text x="1383.4" y="409.9" transform="rotate(-26 1383.4 403.9)">17185</text><text x="1481.2" y="443.3" transform="rotate(-26 1481.2 437.3)">17185</text><text x="1383.4" y="482.9" transform="rotate(-26 1383.4 476.9)">17185</text><text x="1481.2" y="516.3" transform="rotate(-26 1481.2 510.3)">17185</text><text x="1383.4" y="555.9" transform="rotate(-26 1383.4 549.9)">17185</text><text x="1481.2" y="589.3" transform="rotate(-26 1481.2 583.3)">17185</text><text x="1383.4" y="628.9" transform="rotate(-26 1383.4 622.9)">17185</text><text x="1481.2" y="662.3" transform="rotate(-26 1481.2 656.3)">17185</text><text x="1383.4" y="701.9" transform="rotate(-26 1383.4 695.9)">17185</text><text x="1481.2" y="735.3" transform="rotate(-26 1481.2 729.3)">17185</text><text x="1383.4" y="774.9" transform="rotate(-26 1383.4 768.9)">17185</text><text x="1676.7" y="-0.7" transform="rotate(-26 1676.7 -6.7)">17185</text><text x="1578.9" y="38.8" transform="rotate(-26 1578.9 32.8)">17185</text><text x="1676.7" y="72.3" transform="rotate(-26 1676.7 66.3)">17185</text><text x="1578.9" y="111.8" transform="rotate(-26 1578.9 105.8)">17185</text><text x="1676.7" y="145.3" transform="rotate(-26 1676.7 139.3)">17185</text><text x="1578.9" y="184.8" transform="rotate(-26 1578.9 178.8)">17185</text><text x="1676.7" y="218.3" transform="rotate(-26 1676.7 212.3)">17185</text><text x="1578.9" y="257.8" transform="rotate(-26 1578.9 251.8)">17185</text><text x="1676.7" y="291.3" transform="rotate(-26 1676.7 285.3)">17185</text><text x="1578.9" y="330.8" transform="rotate(-26 1578.9 324.8)">17185</text><text x="1676.7" y="364.3" transform="rotate(-26 1676.7 358.3)">17185</text><text x="1578.9" y="403.8" transform="rotate(-26 1578.9 397.8)">17185</text><text x="1676.7" y="437.3" transform="rotate(-26 1676.7 431.3)">17185</text><text x="1578.9" y="476.8" transform="rotate(-26 1578.9 470.8)">17185</text><text x="1676.7" y="510.3" transform="rotate(-26 1676.7 504.3)">17185</text><text x="1578.9" y="549.8" transform="rotate(-26 1578.9 543.8)">17185</text><text x="1676.7" y="583.3" transform="rotate(-26 1676.7 577.3)">17185</text><text x="1578.9" y="622.8" transform="rotate(-26 1578.9 616.8)">17185</text><text x="1676.7" y="656.3" transform="rotate(-26 1676.7 650.3)">17185</text><text x="1578.9" y="695.8" transform="rotate(-26 1578.9 689.8)">17185</text><text x="1676.7" y="729.3" transform="rotate(-26 1676.7 723.3)">17185</text><text x="1578.9" y="768.8" transform="rotate(-26 1578.9 762.8)">17185</text><text x="1872.2" y="-6.8" transform="rotate(-26 1872.2 -12.8)">17185</text><text x="1774.4" y="32.7" transform="rotate(-26 1774.4 26.7)">17185</text><text x="1872.2" y="66.2" transform="rotate(-26 1872.2 60.2)">17185</text><text x="1774.4" y="105.7" transform="rotate(-26 1774.4 99.7)">17185</text><text x="1872.2" y="139.2" transform="rotate(-26 1872.2 133.2)">17185</text><text x="1774.4" y="178.7" transform="rotate(-26 1774.4 172.7)">17185</text><text x="1872.2" y="212.2" transform="rotate(-26 1872.2 206.2)">17185</text><text x="1774.4" y="251.7" transform="rotate(-26 1774.4 245.7)">17185</text><text x="1872.2" y="285.2" transform="rotate(-26 1872.2 279.2)">17185</text><text x="1774.4" y="324.7" transform="rotate(-26 1774.4 318.7)">17185</text><text x="1872.2" y="358.2" transform="rotate(-26 1872.2 352.2)">17185</text><text x="1774.4" y="397.7" transform="rotate(-26 1774.4 391.7)">17185</text><text x="1872.2" y="431.2" transform="rotate(-26 1872.2 425.2)">17185</text><text x="1774.4" y="470.7" transform="rotate(-26 1774.4 464.7)">17185</text><text x="1872.2" y="504.2" transform="rotate(-26 1872.2 498.2)">17185</text><text x="1774.4" y="543.7" transform="rotate(-26 1774.4 537.7)">17185</text><text x="1872.2" y="577.2" transform="rotate(-26 1872.2 571.2)">17185</text><text x="1774.4" y="616.7" transform="rotate(-26 1774.4 610.7)">17185</text><text x="1872.2" y="650.2" transform="rotate(-26 1872.2 644.2)">17185</text><text x="1774.4" y="689.7" transform="rotate(-26 1774.4 683.7)">17185</text><text x="1872.2" y="723.2" transform="rotate(-26 1872.2 717.2)">17185</text><text x="1774.4" y="762.7" transform="rotate(-26 1774.4 756.7)">17185</text><text x="1969.9" y="26.7" transform="rotate(-26 1969.9 20.7)">17185</text><text x="1969.9" y="99.7" transform="rotate(-26 1969.9 93.7)">17185</text><text x="1969.9" y="172.7" transform="rotate(-26 1969.9 166.7)">17185</text><text x="1969.9" y="245.7" transform="rotate(-26 1969.9 239.7)">17185</text><text x="1969.9" y="318.7" transform="rotate(-26 1969.9 312.7)">17185</text><text x="1969.9" y="391.7" transform="rotate(-26 1969.9 385.7)">17185</text><text x="1969.9" y="464.7" transform="rotate(-26 1969.9 458.7)">17185</text><text x="1969.9" y="537.7" transform="rotate(-26 1969.9 531.7)">17185</text><text x="1969.9" y="610.7" transform="rotate(-26 1969.9 604.7)">17185</text><text x="1969.9" y="683.7" transform="rotate(-26 1969.9 677.7)">17185</text><text x="1969.9" y="756.7" transform="rotate(-26 1969.9 750.7)">17185</text></g></svg></div>
</body></html>
